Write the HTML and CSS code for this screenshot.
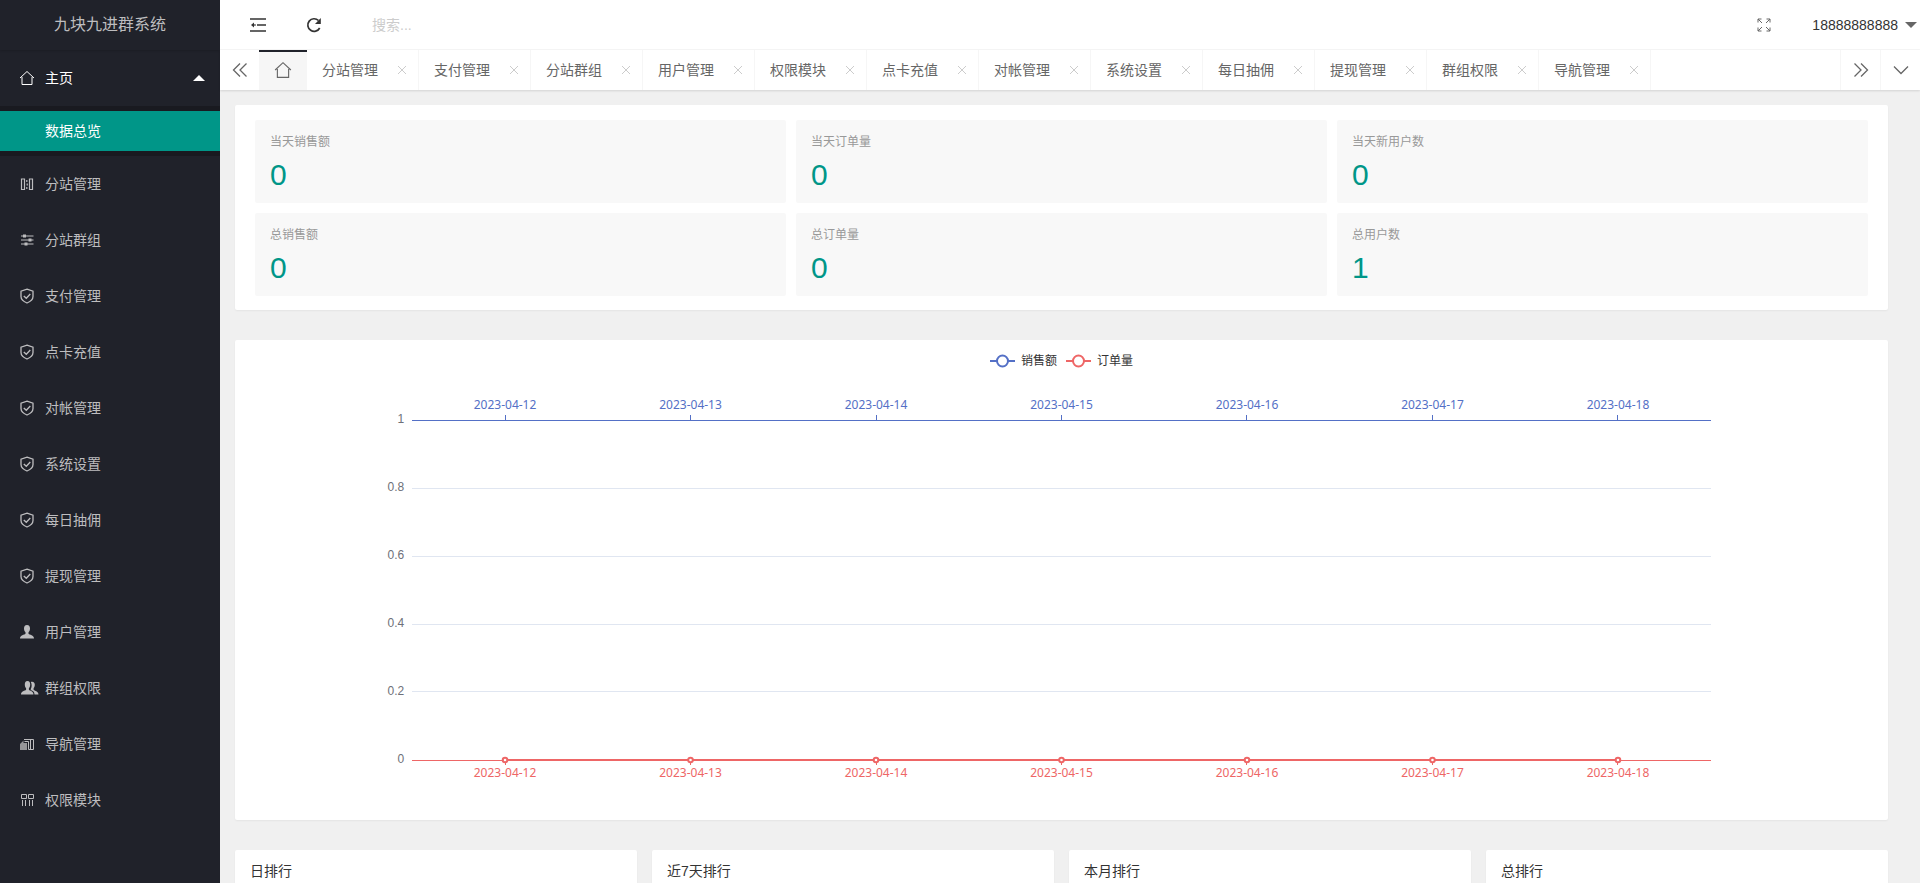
FILE: index.html
```html
<!DOCTYPE html>
<html lang="zh-CN">
<head>
<meta charset="utf-8">
<title>九块九进群系统</title>
<link rel="stylesheet" href="styles.css">
</head>
<body>
<svg class="symbols" aria-hidden="true">
  <symbol id="i-home" viewBox="0 0 16 16"><path d="M1 8 8 1.500 15 8M3 7v7.500h10V7" fill="none" stroke="currentColor"/></symbol>
  <symbol id="i-shield" viewBox="0 0 16 16"><path d="M8 1.200 14 3.200V8.500c0 3-2.500 5-6 6.500-3.500-1.500-6-3.500-6-6.500V3.200Z" fill="none" stroke="currentColor" stroke-width="1.300"/><path d="m4.800 8 2.500 2.300L11.300 6" fill="none" stroke="currentColor" stroke-width="1.300"/></symbol>
  <symbol id="i-split" viewBox="0 0 16 16"><path d="M2.500 3v10.500h3V3zM10.500 3v10.500h3V3z" fill="none" stroke="currentColor" stroke-width="1.200"/><path d="M7 4h1.500v2H7zM7.500 7.500H9v2H7.500zM7 11h1.500v2H7z" fill="currentColor" opacity=".8"/></symbol>
  <symbol id="i-sliders" viewBox="0 0 16 16"><path d="M2 4h12.500M2 8h12.500M2 12h12.500" stroke="currentColor" stroke-width="1.200"/><path d="M4 2.500h3v3H4zM9.500 6.500h3v3h-3zM5.500 10.500h3v3h-3z" fill="currentColor"/></symbol>
  <symbol id="i-user" viewBox="0 0 16 16"><path d="M8 1C5.800 1 5 2.700 5 4.500c0 1.500.6 3 1.500 3.800v1.500C5.500 11 1 11 1 14.500h14c0-3.500-4.500-3.500-5.500-4.700V8.300C10.400 7.500 11 6 11 4.500 11 2.700 10.200 1 8 1Z" fill="currentColor"/></symbol>
  <symbol id="i-users" viewBox="0 0 20 16"><path d="M8.500 1C6.500 1 5.800 2.700 5.800 4.500c0 1.500.5 3 1.300 3.800v1.500C6 11 2 11 2 14.500h12.500c0-3.500-3.600-3.500-4.600-4.700V8.300c.8-.8 1.300-2.300 1.300-3.800C11.200 2.700 10.500 1 8.500 1Z" fill="currentColor"/><path d="M11.800 2c2.700-.8 4 .8 4 2.800 0 1.500-.5 2.700-1.200 3.400v1.500c1 1.200 4.900 1.500 4.900 4.800h-4c0-2.500-1.500-3.700-3.700-4.400V9c1-1.500 1.300-5 0-7Z" fill="currentColor"/></symbol>
  <symbol id="i-nav" viewBox="0 0 16 16"><path d="M5 3.500h9.500v10H9.500M9.500 13.500v-8h-4M11.500 3.500v10" fill="none" stroke="currentColor"/><path d="M4.500 4.500 1 8v6h7V7H4.500Z" fill="currentColor" opacity=".75"/></symbol>
  <symbol id="i-modules" viewBox="0 0 16 16"><path d="M2.500 2.500h5v4h-5zM9.500 2.500h5v4h-5zM3.500 8v6M6.500 8v6M10.500 8v6M13.500 8v6" fill="none" stroke="currentColor"/></symbol>
  <symbol id="i-close" viewBox="0 0 10 10"><path d="m1 1 8 8M9 1 1 9" fill="none" stroke="currentColor"/></symbol>
</svg>
<div class="app">
  <aside class="side">
    <div class="logo">九块九进群系统</div>
    <nav>
      <a class="item open" href="#"><svg class="ico"><use href="#i-home"/></svg>主页<span class="caret up"></span></a>
      <div class="sub"><a class="child" href="#">数据总览</a></div>
      <a class="item" href="#"><svg class="ico"><use href="#i-split"/></svg>分站管理</a>
      <a class="item" href="#"><svg class="ico"><use href="#i-sliders"/></svg>分站群组</a>
      <a class="item" href="#"><svg class="ico"><use href="#i-shield"/></svg>支付管理</a>
      <a class="item" href="#"><svg class="ico"><use href="#i-shield"/></svg>点卡充值</a>
      <a class="item" href="#"><svg class="ico"><use href="#i-shield"/></svg>对帐管理</a>
      <a class="item" href="#"><svg class="ico"><use href="#i-shield"/></svg>系统设置</a>
      <a class="item" href="#"><svg class="ico"><use href="#i-shield"/></svg>每日抽佣</a>
      <a class="item" href="#"><svg class="ico"><use href="#i-shield"/></svg>提现管理</a>
      <a class="item" href="#"><svg class="ico"><use href="#i-user"/></svg>用户管理</a>
      <a class="item" href="#"><svg class="ico wide"><use href="#i-users"/></svg>群组权限</a>
      <a class="item" href="#"><svg class="ico"><use href="#i-nav"/></svg>导航管理</a>
      <a class="item" href="#"><svg class="ico"><use href="#i-modules"/></svg>权限模块</a>
    </nav>
  </aside>
  <div class="main">
    <header class="top">
      <button class="tool" aria-label="收起菜单"><svg width="16" height="16" viewBox="0 0 16 16"><path d="M0 2h16M7 8h9M0 14h16" stroke="currentColor" stroke-width="1.600"/><path d="M1 8 4 5.500v5Z" fill="currentColor"/><path d="M3 8h3" stroke="currentColor" stroke-width="1.200"/></svg></button>
      <button class="tool" aria-label="刷新"><svg width="16" height="16" viewBox="0 0 16 16"><path d="M13.700 11A6.300 6.300 0 1 1 12.500 3.500" fill="none" stroke="currentColor" stroke-width="1.700"/><path d="M14.800 1v6H9Z" fill="currentColor"/></svg></button>
      <input class="search" type="text" placeholder="搜索..." aria-label="搜索">
      <button class="tool full" aria-label="全屏"><svg width="14" height="14" viewBox="0 0 14 14"><path d="M1 4.500V1h3.500M1 1l4 4M9.500 1H13v3.500M13 1 9 5M1 9.500V13h3.500M1 13l4-4M13 9.500V13H9.500M13 13 9 9" fill="none" stroke="currentColor"/></svg></button>
      <button class="account">18888888888<span class="caret down"></span></button>
    </header>
    <div class="tabs">
      <button class="ctl" aria-label="向左"><svg width="16" height="16" viewBox="0 0 16 16"><path d="M8 1.500 1.500 8 8 14.500M14.500 1.500 8 8l6.500 6.500" fill="none" stroke="currentColor" stroke-width="1.300"/></svg></button>
      <a class="home" href="#" aria-label="主页"><svg width="18" height="18"><use href="#i-home"/></svg></a>
      <div class="list">
        <div class="tab"><a href="#">分站管理</a><button aria-label="关闭"><svg width="10" height="10"><use href="#i-close"/></svg></button></div>
        <div class="tab"><a href="#">支付管理</a><button aria-label="关闭"><svg width="10" height="10"><use href="#i-close"/></svg></button></div>
        <div class="tab"><a href="#">分站群组</a><button aria-label="关闭"><svg width="10" height="10"><use href="#i-close"/></svg></button></div>
        <div class="tab"><a href="#">用户管理</a><button aria-label="关闭"><svg width="10" height="10"><use href="#i-close"/></svg></button></div>
        <div class="tab"><a href="#">权限模块</a><button aria-label="关闭"><svg width="10" height="10"><use href="#i-close"/></svg></button></div>
        <div class="tab"><a href="#">点卡充值</a><button aria-label="关闭"><svg width="10" height="10"><use href="#i-close"/></svg></button></div>
        <div class="tab"><a href="#">对帐管理</a><button aria-label="关闭"><svg width="10" height="10"><use href="#i-close"/></svg></button></div>
        <div class="tab"><a href="#">系统设置</a><button aria-label="关闭"><svg width="10" height="10"><use href="#i-close"/></svg></button></div>
        <div class="tab"><a href="#">每日抽佣</a><button aria-label="关闭"><svg width="10" height="10"><use href="#i-close"/></svg></button></div>
        <div class="tab"><a href="#">提现管理</a><button aria-label="关闭"><svg width="10" height="10"><use href="#i-close"/></svg></button></div>
        <div class="tab"><a href="#">群组权限</a><button aria-label="关闭"><svg width="10" height="10"><use href="#i-close"/></svg></button></div>
        <div class="tab"><a href="#">导航管理</a><button aria-label="关闭"><svg width="10" height="10"><use href="#i-close"/></svg></button></div>
      </div>
      <button class="ctl end" aria-label="向右"><svg width="16" height="16" viewBox="0 0 16 16"><path d="M1.500 1.500 8 8l-6.500 6.500M8 1.500 14.500 8 8 14.500" fill="none" stroke="currentColor" stroke-width="1.300"/></svg></button>
      <button class="ctl end" aria-label="更多"><svg width="16" height="16" viewBox="0 0 16 16"><path d="m1 4.500 7 7 7-7" fill="none" stroke="currentColor" stroke-width="1.300"/></svg></button>
    </div>
    <main class="content">
      <section class="card stats">
        <div class="stat"><h3>当天销售额</h3><p>0</p></div>
        <div class="stat"><h3>当天订单量</h3><p>0</p></div>
        <div class="stat"><h3>当天新用户数</h3><p>0</p></div>
        <div class="stat"><h3>总销售额</h3><p>0</p></div>
        <div class="stat"><h3>总订单量</h3><p>0</p></div>
        <div class="stat"><h3>总用户数</h3><p>1</p></div>
      </section>
      <section class="card chart">
        <div class="legend">
          <span class="key"><svg class="blue" width="25" height="14"><path d="M0 7h25"/><circle cx="12.500" cy="7" r="5.500"/></svg>销售额</span>
          <span class="key"><svg class="red" width="25" height="14"><path d="M0 7h25"/><circle cx="12.500" cy="7" r="5.500"/></svg>订单量</span>
        </div>
        <svg class="plot" role="img" aria-label="销售额与订单量">
          <g class="grid">
            <line x1="10%" x2="90%" y1="118.500" y2="118.500"/><line x1="10%" x2="90%" y1="186.500" y2="186.500"/><line x1="10%" x2="90%" y1="254.500" y2="254.500"/><line x1="10%" x2="90%" y1="321.500" y2="321.500"/>
          </g>
          <svg x="10%" overflow="visible"><g class="ylab">
            <text x="-8" y="53">1</text><text x="-8" y="121">0.8</text><text x="-8" y="189">0.6</text><text x="-8" y="257">0.4</text><text x="-8" y="325">0.2</text><text x="-8" y="393">0</text>
          </g></svg>
          <g class="axis blue">
            <line x1="10%" x2="90%" y1="50.500" y2="50.500"/>
            <line x1="15.714%" x2="15.714%" y1="45" y2="50"/><line x1="27.143%" x2="27.143%" y1="45" y2="50"/><line x1="38.571%" x2="38.571%" y1="45" y2="50"/><line x1="50%" x2="50%" y1="45" y2="50"/><line x1="61.429%" x2="61.429%" y1="45" y2="50"/><line x1="72.857%" x2="72.857%" y1="45" y2="50"/><line x1="84.286%" x2="84.286%" y1="45" y2="50"/>
          </g>
          <g class="date tblue">
            <text x="15.714%" y="39">2023-04-12</text><text x="27.143%" y="39">2023-04-13</text><text x="38.571%" y="39">2023-04-14</text><text x="50%" y="39">2023-04-15</text><text x="61.429%" y="39">2023-04-16</text><text x="72.857%" y="39">2023-04-17</text><text x="84.286%" y="39">2023-04-18</text>
          </g>
          <g class="axis red">
            <line x1="10%" x2="90%" y1="390.500" y2="390.500"/>
            <line x1="15.714%" x2="15.714%" y1="391" y2="395"/><line x1="27.143%" x2="27.143%" y1="391" y2="395"/><line x1="38.571%" x2="38.571%" y1="391" y2="395"/><line x1="50%" x2="50%" y1="391" y2="395"/><line x1="61.429%" x2="61.429%" y1="391" y2="395"/><line x1="72.857%" x2="72.857%" y1="391" y2="395"/><line x1="84.286%" x2="84.286%" y1="391" y2="395"/>
          </g>
          <g class="date tred">
            <text x="15.714%" y="407">2023-04-12</text><text x="27.143%" y="407">2023-04-13</text><text x="38.571%" y="407">2023-04-14</text><text x="50%" y="407">2023-04-15</text><text x="61.429%" y="407">2023-04-16</text><text x="72.857%" y="407">2023-04-17</text><text x="84.286%" y="407">2023-04-18</text>
          </g>
          <g class="series">
            <line x1="15.714%" x2="84.286%" y1="390" y2="390"/>
            <circle cx="15.714%" cy="390" r="2.300"/><circle cx="27.143%" cy="390" r="2.300"/><circle cx="38.571%" cy="390" r="2.300"/><circle cx="50%" cy="390" r="2.300"/><circle cx="61.429%" cy="390" r="2.300"/><circle cx="72.857%" cy="390" r="2.300"/><circle cx="84.286%" cy="390" r="2.300"/>
          </g>
        </svg>
      </section>
      <div class="ranks">
        <section class="card rank"><h2>日排行</h2></section>
        <section class="card rank"><h2>近7天排行</h2></section>
        <section class="card rank"><h2>本月排行</h2></section>
        <section class="card rank"><h2>总排行</h2></section>
      </div>
    </main>
  </div>
</div>
</body>
</html>
```
FILE: styles.css
```css
* { box-sizing: border-box; }
body { margin: 0; font: 14px/24px "Liberation Sans", "Noto Sans CJK SC", sans-serif; color: #333; background: #f0f0f0; }
a { color: inherit; text-decoration: none; }
button { border: 0; padding: 0; background: none; font: inherit; color: inherit; cursor: pointer; }
h2, h3, p { margin: 0; font-weight: 400; }
svg { display: block; }
.symbols { display: none; }
.app { display: flex; height: 100vh; overflow: hidden; }

.side { flex: 0 0 220px; background: #20222a; color: #bdbdbf; }
.logo { height: 50px; line-height: 49px; text-align: center; font-size: 16px; box-shadow: 0 1px 2px rgba(0,0,0,.15); }
.item { display: flex; align-items: center; height: 56px; padding: 0 15px 0 19px; }
.item.open { color: #fff; }
.ico { width: 16px; height: 16px; margin-right: 10px; }
.ico.wide { width: 20px; margin-right: 6px; }
.caret { border: 6px solid transparent; }
.caret.up { margin-left: auto; border-top: 0; border-bottom-color: #fff; }
.caret.down { border-bottom: 0; border-top-color: #666; }
.sub { padding: 5px 0; background: #191a20; }
.child { display: block; height: 40px; padding-left: 45px; line-height: 40px; background: #009688; color: #fff; }

.main { flex: 1; min-width: 0; display: flex; flex-direction: column; }
.top { display: flex; flex: 0 0 50px; align-items: center; padding: 0 3px 0 10px; background: #fff; border-bottom: 1px solid #f6f6f6; }
.tool { display: flex; width: 56px; height: 49px; align-items: center; justify-content: center; color: #333; }
.search { width: 200px; margin-left: 20px; border: 0; padding: 0 0 0 10px; font: inherit; background: none; }
.search::placeholder { color: #ccc; }
.full { margin-left: auto; color: #666; }
.account { display: flex; align-items: center; gap: 7px; padding-left: 20px; }

.tabs { position: relative; display: flex; flex: 0 0 40px; background: #fff; box-shadow: 0 1px 2px rgba(0,0,0,.12); color: #666; }
.ctl { display: flex; width: 39px; align-items: center; justify-content: center; }
.ctl.end { width: 40px; border-left: 1px solid #f6f6f6; }
.home { display: flex; width: 48px; align-items: center; justify-content: center; background: #f6f6f6; border-top: 2px solid #20222a; padding-bottom: 2px; }
.list { display: flex; flex: 1; overflow: hidden; }
.tab { display: flex; flex: none; align-items: center; padding: 0 11px 0 15px; border-right: 1px solid #f6f6f6; }
.tab button { margin-left: 19px; color: #ccc; }

.content { display: flex; flex: 1; flex-direction: column; gap: 30px; padding: 15px 32px 0 15px; overflow: hidden; }
.card { flex: none; background: #fff; border-radius: 2px; box-shadow: 0 1px 2px rgba(0,0,0,.05); }
.stats { display: grid; grid-template-columns: repeat(3, 1fr); gap: 10px; padding: 15px 20px 14px; }
.stat { height: 83px; padding: 10px 15px; background: #f8f8f8; border-radius: 2px; }
.stat h3 { font-size: 12px; color: #999; }
.stat p { font-size: 30px; line-height: 42px; color: #009688; }

.chart { padding: 11px 15px 10px; }
.legend { display: flex; justify-content: center; gap: 9px; height: 19px; font-size: 12px; line-height: 20px; }
.key { display: flex; align-items: center; gap: 6px; }
.key svg { stroke-width: 2px; }
.key circle { fill: #fff; }
.blue { stroke: #5470c6; }
.red { stroke: #ee6666; }
.plot { width: 100%; height: 440px; font-size: 12px; }
.grid { stroke: #e0e6f1; }
.axis, .grid { shape-rendering: crispEdges; }
.ylab { fill: #6e7079; text-anchor: end; }
.date { font-family: "Noto Sans", sans-serif; text-anchor: middle; }
.tblue { fill: #5470c6; }
.tred { fill: #ee6666; }
.series { stroke: #ee6666; stroke-width: 2px; fill: #fff; }

.ranks { display: grid; flex: none; grid-template-columns: repeat(4, 1fr); gap: 15px; }
.rank { height: 300px; padding: 0 15px; }
.rank h2 { font-size: 14px; line-height: 42px; }
```
